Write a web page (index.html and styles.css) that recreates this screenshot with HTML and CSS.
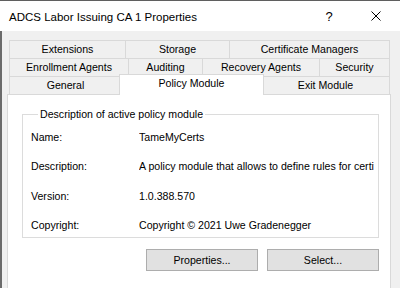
FILE: index.html
```html
<!DOCTYPE html>
<html lang="en">
<head>
    <meta charset="UTF-8">
    <title>ADCS Labor Issuing CA 1 Properties</title>
    <link rel="stylesheet" href="styles.css">
</head>
<body>
    <div class="dialog">
        <div class="titlebar">
            <span class="title">ADCS Labor Issuing CA 1 Properties</span>
            <span class="help">?</span>
            <span class="close">
                <svg width="10" height="10" viewBox="0 0 10 10">
                    <path d="M0.5 0.5 L9.5 9.5 M9.5 0.5 L0.5 9.5" stroke="#000" stroke-width="1" fill="none"/>
                </svg>
            </span>
        </div>
        <div class="client">
            <div class="tabs">
                <div class="tab-row">
                    <div class="tab t-ext">Extensions</div>
                    <div class="tab t-storage">Storage</div>
                    <div class="tab t-certmgr">Certificate Managers</div>
                </div>
                <div class="tab-row">
                    <div class="tab t-enroll">Enrollment Agents</div>
                    <div class="tab t-audit">Auditing</div>
                    <div class="tab t-recovery">Recovery Agents</div>
                    <div class="tab t-security">Security</div>
                </div>
                <div class="tab-row">
                    <div class="tab t-general">General</div>
                    <div class="tab t-policy selected">Policy Module</div>
                    <div class="tab t-exit">Exit Module</div>
                </div>
            </div>
            <div class="page">
                <fieldset class="group">
                    <legend>Description of active policy module</legend>
                    <div class="props">
                        <div class="label">Name:</div>
                        <div class="value">TameMyCerts</div>
                        <div class="label">Description:</div>
                        <div class="value">A policy module that allows to define rules for certificate requests</div>
                        <div class="label">Version:</div>
                        <div class="value">1.0.388.570</div>
                        <div class="label">Copyright:</div>
                        <div class="value">Copyright © 2021 Uwe Gradenegger</div>
                    </div>
                </fieldset>
                <div class="buttons">
                    <button>Properties...</button>
                    <button>Select...</button>
                </div>
            </div>
        </div>
    </div>
</body>
</html>
```

FILE: styles.css
```css
body {
    margin: 0;
    padding: 0;
    font-family: "Liberation Sans", Arial, sans-serif;
    color: #000;
}
.dialog {
    width: 400px;
    height: 288px;
    overflow: hidden;
    display: flex;
    flex-direction: column;
    background: #f0f0f0;
}
.titlebar {
    flex-shrink: 0;
    height: 30px;
    border-top: 1px solid #5f5f5f;
    background: #fff;
    display: flex;
    align-items: center;
    padding-left: 9px;
    font-size: 11.5px;
}
.title {
    flex: 1;
    padding-top: 1px;
}
.help {
    width: 12px;
    margin-right: 36px;
    font-size: 13px;
    text-align: center;
}
.close {
    width: 10px;
    height: 10px;
    margin-right: 19px;
    display: flex;
}
.client {
    flex: 1;
    min-height: 0;
    overflow: hidden;
    border-left: 2px solid #6b6b6b;
    padding-top: 9px;
    font-size: 10.6px;
}
.tabs {
    margin-left: 7px;
    width: 381px;
}
.tab-row {
    display: flex;
}
.tab {
    box-sizing: border-box;
    height: 18px;
    line-height: 17px;
    border: 1px solid #d9d9d9;
    border-bottom: none;
    text-align: center;
    margin-left: -1px;
    white-space: nowrap;
}
.tab:first-child {
    margin-left: 0;
}
.t-ext { width: 117px; }
.t-storage { width: 105px; }
.t-certmgr { width: 161px; }
.t-enroll { width: 120px; }
.t-audit { width: 75px; }
.t-recovery { width: 118px; }
.t-security { width: 71px; }
.t-general { width: 113px; }
.t-policy { width: 145px; margin-left: -3px; }
.t-exit { width: 129px; margin-left: -3px; }
.tab.selected {
    position: relative;
    z-index: 1;
    height: 21px;
    margin-top: -2px;
    margin-bottom: -1px;
    line-height: 17px;
    background: #fff;
}
.page {
    margin-left: 5px;
    width: 384px;
    height: 200px;
    box-sizing: border-box;
    border: 1px solid #d9d9d9;
    background: #fff;
}
.group {
    box-sizing: border-box;
    width: 357px;
    margin: 13px 0 0 14px;
    padding: 9px 4px 5px 8px;
    border: 1px solid #dcdcdc;
}
.group legend {
    margin-left: 7px;
    padding: 0 2px;
    line-height: 13px;
}
.props {
    display: grid;
    grid-template-columns: 108px minmax(0, 1fr);
    grid-auto-rows: 14px;
    row-gap: 15.3px;
    line-height: 14px;
}
.value {
    white-space: nowrap;
    overflow: hidden;
}
.buttons {
    width: 357px;
    margin: 11px 0 0 14px;
    display: flex;
    justify-content: flex-end;
    gap: 9px;
}
.buttons button {
    width: 112px;
    height: 22px;
    padding: 0;
    font-family: inherit;
    font-size: 10.6px;
    color: #000;
    background: #e1e1e1;
    border: 1px solid #adadad;
    border-radius: 0;
}
```
